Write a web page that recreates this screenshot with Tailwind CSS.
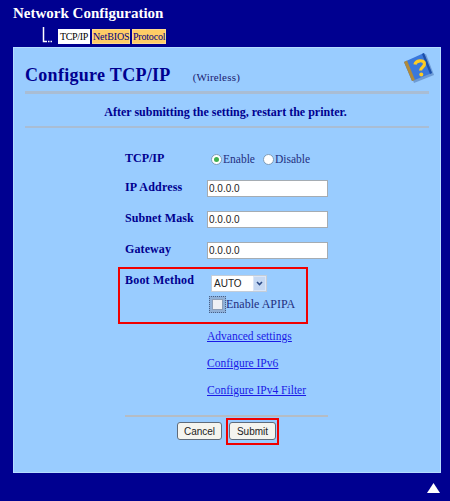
<!DOCTYPE html>
<html lang="en">
<head>
<meta charset="utf-8"/>
<title>Network Configuration</title>
<script src="https://cdn.jsdelivr.net/npm/@tailwindcss/browser@4"></script>
</head>
<body class="bg-[#000090] w-[450px] h-[501px] overflow-hidden relative font-['Liberation_Serif',serif]">
  <h1 class="pl-[13px] pt-[5px] h-[27px] text-[15px] leading-[16px] font-bold text-white">Network Configuration</h1>
  <!-- tabs -->
  <div class="flex items-start h-[17px] pl-[42px]">
    <svg width="16" height="16" viewBox="0 0 16 16"><path d="M1.5 0V14.5H5" stroke="#fff" stroke-width="1.5" fill="none"/><path d="M6 14.5H11" stroke="#fff" stroke-width="1.5" fill="none" stroke-dasharray="1.5 1"/></svg>
    <div class="flex gap-[2px] mt-[2px] text-[10px] h-[15px]">
      <span class="bg-white text-black w-[32px] text-center leading-[15px] tracking-[-0.3px]">TCP/IP</span>
      <span class="bg-[#ffcc66] text-[#000080] border border-[#ffd98c] w-[38px] text-center leading-[13px] tracking-[-0.1px]">NetBIOS</span>
      <span class="bg-[#ffcc66] text-[#000080] border border-[#ffd98c] w-[34px] text-center leading-[13px] tracking-[-0.2px]">Protocol</span>
    </div>
  </div>
  <!-- panel -->
  <main class="mx-[13px] mt-[3px] w-[428px] h-[426px] bg-[#99ccff] border border-[#b5dcff] px-[11px] text-[#000090] relative">
    <div class="flex items-baseline h-[44px] pt-[17px]">
      <h2 class="text-[18px] leading-[20px] font-bold tracking-[0.3px]">Configure TCP/IP</h2>
      <span class="ml-[22px] text-[11px] leading-[12px] tracking-[0.2px] text-[#1a1a70]">(Wireless)</span>
    </div>
    <svg class="absolute left-[388px] top-[3px]" width="33" height="33" viewBox="0 0 33 33">
      <path d="M4 12L24 3L32 24L12 32Z" fill="#1c3f86" opacity=".35"/>
      <path d="M2 11L22 2L30 22L10 30Z" fill="#3a78dc"/>
      <path d="M2 11L5 9.6L13 29L10 30Z" fill="#b08a3a"/>
      <path d="M22 2L30 22L28 23L20 3Z" fill="#1d4fa8"/>
      <path d="M13 13.5C13.5 9.5 22 8 22.5 12.5C23 16 18.5 16.5 18.5 19.5" fill="none" stroke="#ffcc22" stroke-width="3.2"/>
      <circle cx="19.3" cy="23.5" r="2" fill="#ffcc22"/>
    </svg>
    <div class="h-[3px] bg-[#a9bdd4] -mt-[1px]"></div>
    <p class="h-[32px] pr-[3px] text-[12px] leading-[36px] font-bold text-center">After submitting the setting, restart the printer.</p>
    <div class="h-[2px] bg-[#a9bdd4]"></div>

    <section class="pl-[100px] pt-[18px] text-[12px]">
      <div class="flex h-[34px]">
        <span class="w-[85px] font-bold leading-[24px]">TCP/IP</span>
        <div class="flex items-start pt-[6px] text-[11.5px] text-[#1f2f80] leading-[15px]">
          <span class="ml-[1px] mt-[2px] w-[11px] h-[11px] rounded-full border border-[#7f9db9] bg-white flex items-center justify-center"><span class="w-[5px] h-[5px] rounded-full bg-[#3fb04f]"></span></span>
          <span class="ml-[1px]">Enable</span>
          <span class="ml-[8px] mt-[2px] w-[11px] h-[11px] rounded-full border border-[#7f9db9] bg-white"></span>
          <span class="ml-[1px]">Disable</span>
        </div>
      </div>
      <div class="flex h-[31px]">
        <span class="w-[82px] font-bold leading-[15px] tracking-[0.2px]">IP Address</span>
        <input value="0.0.0.0" class="w-[121px] h-[17px] bg-white border border-[#a5acb2] px-[1px] text-[10px] text-[#222] font-['Liberation_Sans',sans-serif]"/>
      </div>
      <div class="flex h-[31px]">
        <span class="w-[82px] font-bold leading-[15px] tracking-[0.1px]">Subnet Mask</span>
        <input value="0.0.0.0" class="w-[121px] h-[17px] bg-white border border-[#a5acb2] px-[1px] text-[10px] text-[#222] font-['Liberation_Sans',sans-serif]"/>
      </div>
      <div class="flex h-[31px]">
        <span class="w-[82px] font-bold leading-[15px] tracking-[0.1px]">Gateway</span>
        <input value="0.0.0.0" class="w-[121px] h-[17px] bg-white border border-[#a5acb2] px-[1px] text-[10px] text-[#222] font-['Liberation_Sans',sans-serif]"/>
      </div>
      <div class="flex h-[56px] pt-[2px]">
        <span class="w-[86px] font-bold leading-[11px] tracking-[0.2px]">Boot Method</span>
        <div>
          <div class="w-[56px] h-[17px] bg-white border border-[#c4cdd8] flex items-center pl-[2px] text-[10px] text-[#222] font-['Liberation_Sans',sans-serif]">
            <span class="flex-1">AUTO</span>
            <span class="w-[13px] h-[15px] bg-[#c5d8f3] border border-[#dbe6f7] flex items-center justify-center"><svg width="7" height="5" viewBox="0 0 7 5"><path d="M1 1L3.5 3.5L6 1" fill="none" stroke="#2c4a86" stroke-width="1.6"/></svg></span>
          </div>
          <div class="flex items-center mt-[4px] -ml-[2px] text-[#1f2f80]">
            <span class="w-[17px] h-[17px] border border-dotted border-[#44618c] bg-[#8fb0d8] flex items-center justify-center"><span class="w-[11px] h-[11px] bg-[#eef0f4] border border-[#8d9fb7]"></span></span>
            <span class="leading-[17px]">Enable APIPA</span>
          </div>
        </div>
      </div>
      <div class="pl-[82px] flex flex-col gap-[13px] text-[11.5px] leading-[14px] text-[#1a1ae6] underline">
        <a href="#">Advanced settings</a>
        <a href="#">Configure IPv6</a>
        <a href="#">Configure IPv4 Filter</a>
      </div>
    </section>

    <div class="ml-[100px] mt-[18px] w-[203px] h-[2px] bg-[#b5bcc4]"></div>
    <div class="flex justify-center gap-[7px] mt-[5px] pr-[1px] text-[10px] font-['Liberation_Sans',sans-serif] text-[#222]">
      <button class="w-[45px] h-[18px] bg-[#f4f4ef] border border-[#5f6b7a] rounded-[3px] leading-[15px]">Cancel</button>
      <button class="w-[47px] h-[18px] bg-[#f4f4ef] border border-[#5f6b7a] rounded-[3px] leading-[15px]">Submit</button>
    </div>
  </main>
  <!-- red callouts -->
  <div class="absolute left-[118px] top-[267px] w-[190px] h-[57px] border-[2px] border-[#f00000]"></div>
  <div class="absolute left-[226px] top-[418px] w-[53px] h-[27px] border-[2px] border-[#f00000]"></div>
  <svg class="absolute left-[427px] top-[483px]" width="13" height="10" viewBox="0 0 13 10"><path d="M6.5 0L13 10H0Z" fill="#fff"/></svg>
</body>
</html>
